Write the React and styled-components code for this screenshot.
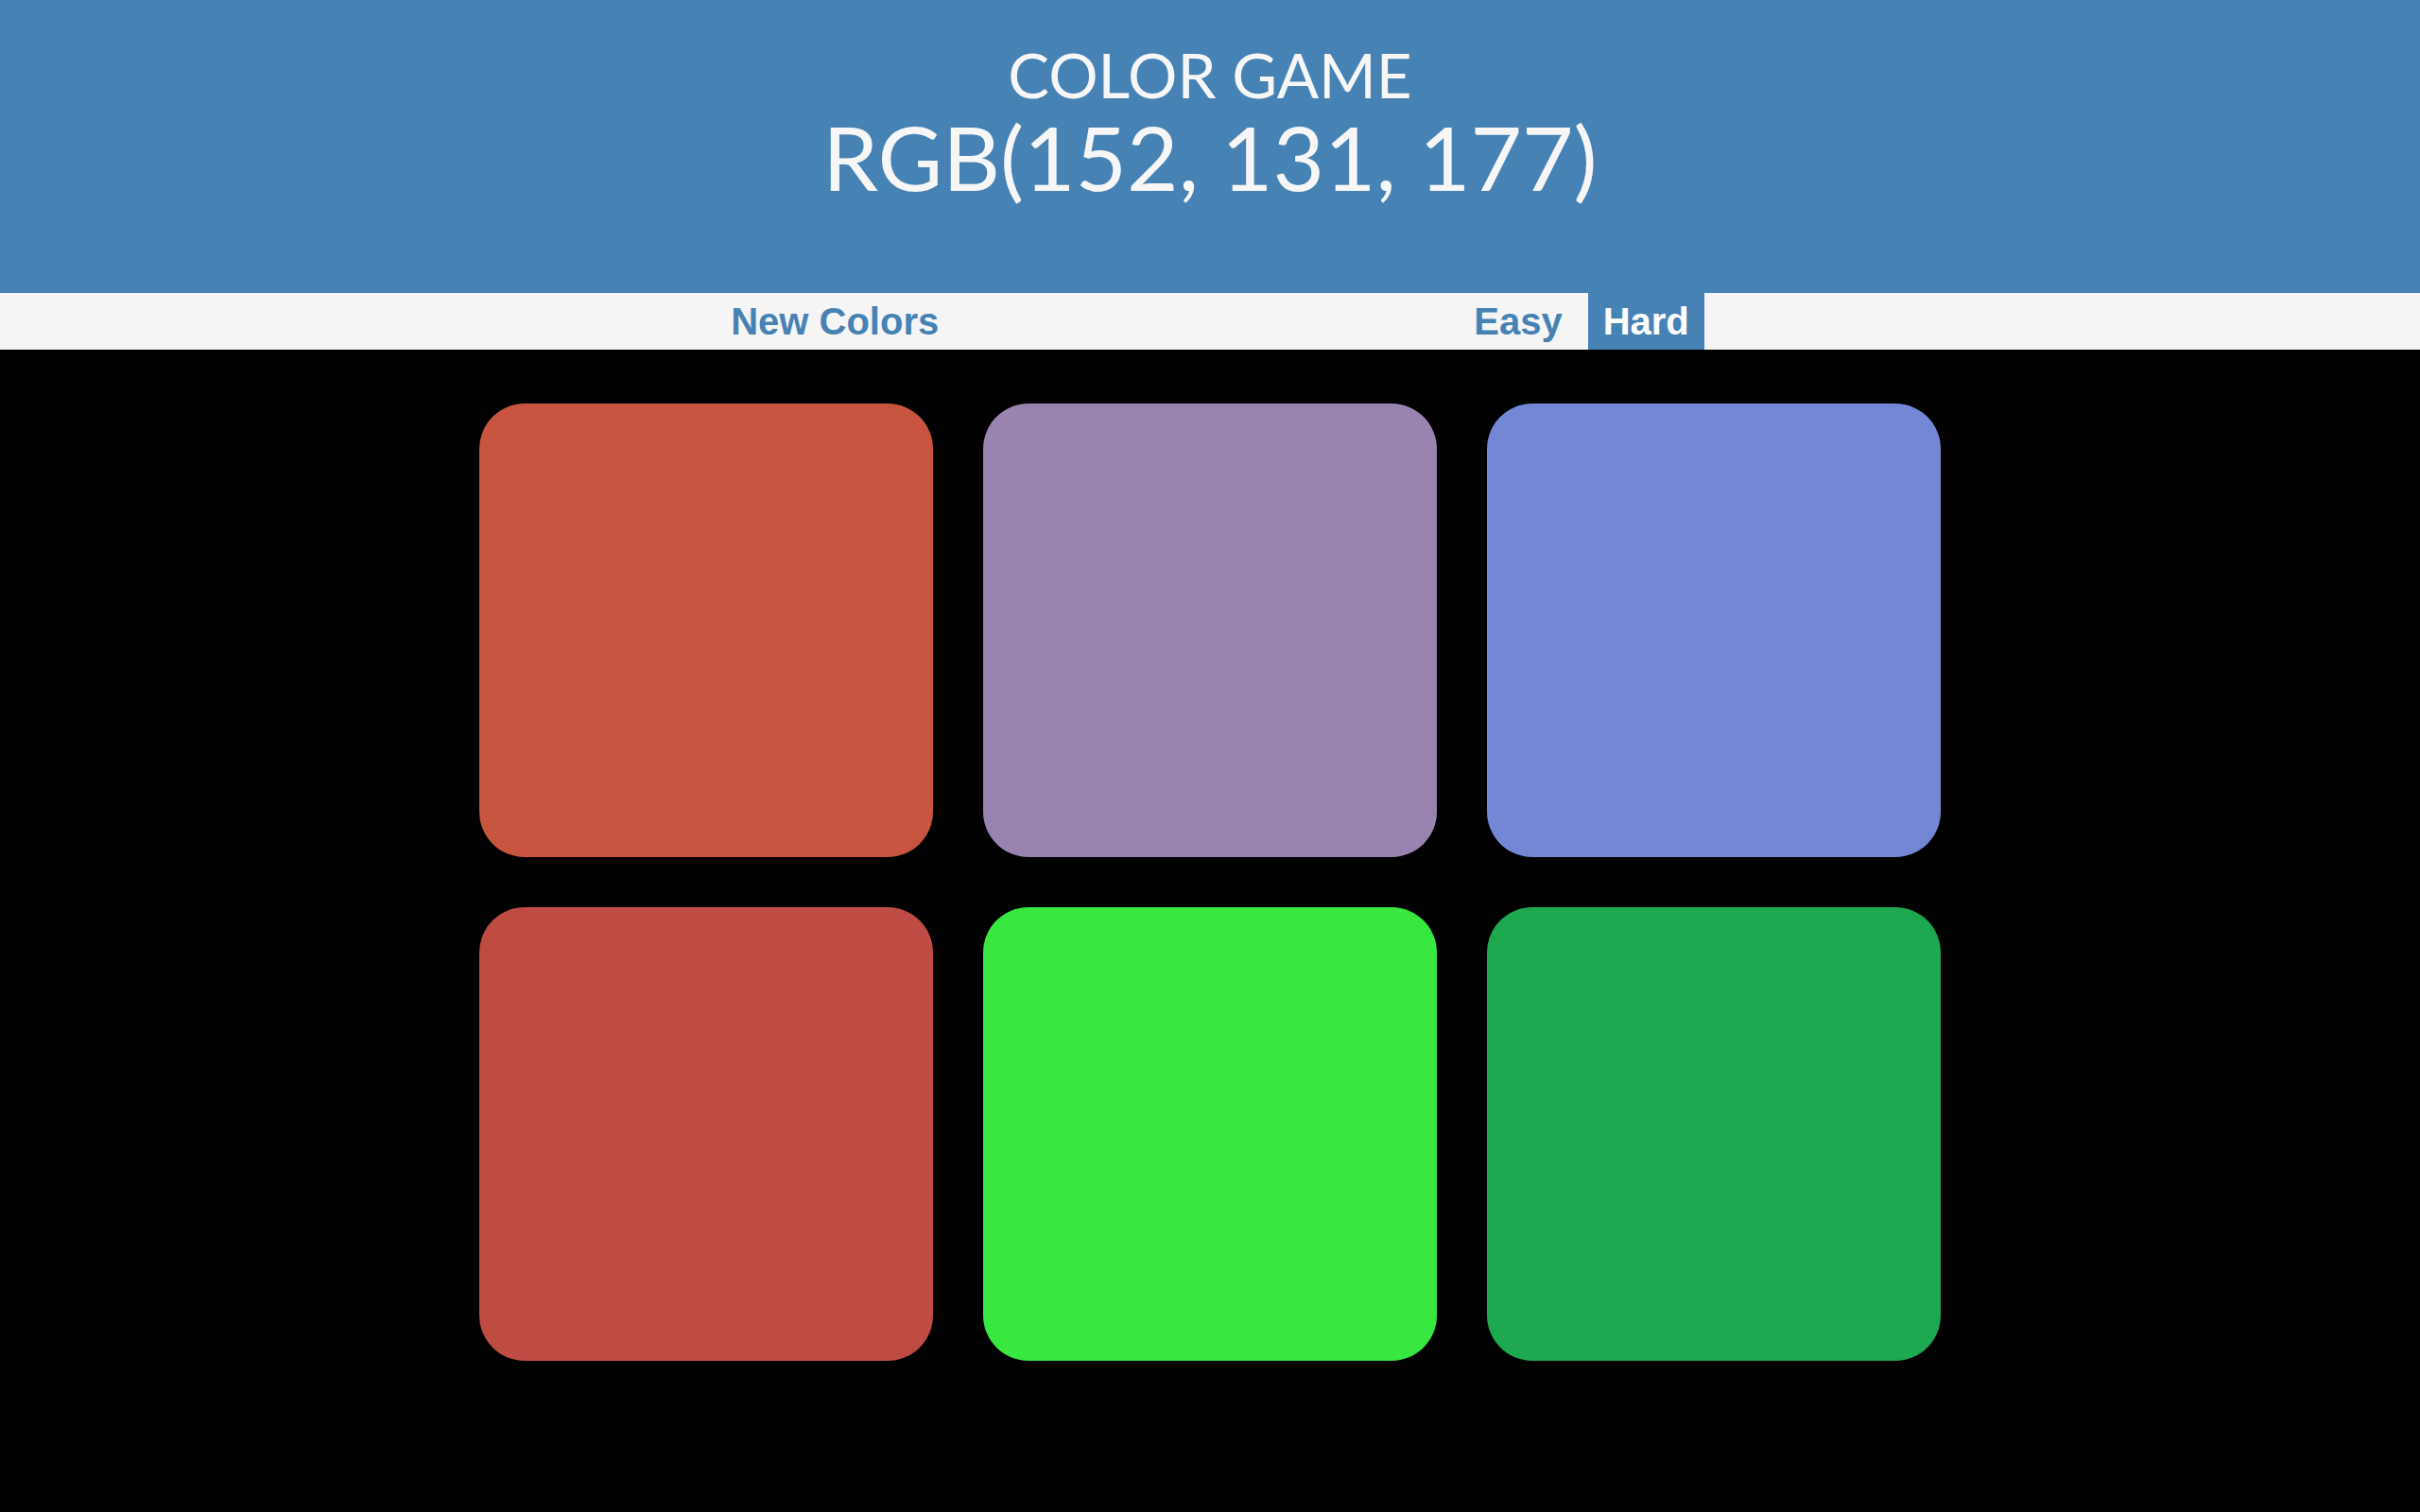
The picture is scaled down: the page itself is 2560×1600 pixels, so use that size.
import React from 'react';
import styled, { createGlobalStyle } from 'styled-components';

const GlobalStyle = createGlobalStyle`
  html, body {
    margin: 0;
    padding: 0;
    background: #000;
    min-height: 100vh;
  }
  * { box-sizing: border-box; }
`;

const squares = ["#c75540", "#9883b1", "#7387d5", "#bf4c43", "#38e840", "#1ea850"];

const App = () => {
  return (
    <Page>
      <GlobalStyle />
      <Header>
        <Title>COLOR GAME</Title>
        <Target>RGB(152, 131, 177)</Target>
      </Header>

      <Stripe>
        <NavButton>New Colors</NavButton>
        <Message />
        <NavButton>Easy</NavButton>
        <NavButton selected>Hard</NavButton>
      </Stripe>

      <Board>
        {squares.map((c, i) => (
          <Square key={i} $color={c} />
        ))}
      </Board>
    </Page>
  );
}

const Page = styled.div`
  min-height: 100vh;
  background: #000;
`

const Header = styled.header`
  height: 310px;
  background: #4682b4;
  color: #f6f6f6;
  display: flex;
  flex-direction: column;
  align-items: center;
  padding-top: 46px;
  font-family: Lato, "Open Sans", sans-serif;
  font-weight: 400;
`

const Title = styled.h1`
  margin: 0 0 7px;
  font-size: 65.5px;
  line-height: 65.5px;
  font-weight: 400;
`

const Target = styled.div`
  font-size: 94px;
  line-height: 94px;
`

const Stripe = styled.nav`
  height: 60px;
  background: #f5f5f5;
  display: flex;
  justify-content: center;
  align-items: stretch;
  gap: 11px;
`

const NavButton = styled.button`
  border: none;
  margin: 0;
  padding: 0 16px;
  font-family: "Liberation Sans", Arial, sans-serif;
  font-weight: 700;
  font-size: 40px;
  line-height: 60px;
  color: ${p => p.selected ? "#fff" : "#4682b4"};
  background: ${p => p.selected ? "#4682b4" : "transparent"};
  cursor: pointer;
`

const Message = styled.span`
  width: 20%;
`

const Board = styled.div`
  display: grid;
  grid-template-columns: repeat(3, 480px);
  grid-auto-rows: 480px;
  gap: 53px;
  justify-content: center;
  padding-top: 57px;
`

const Square = styled.div`
  border-radius: 48px;
  background: ${p => p.$color};
`

export default App;
